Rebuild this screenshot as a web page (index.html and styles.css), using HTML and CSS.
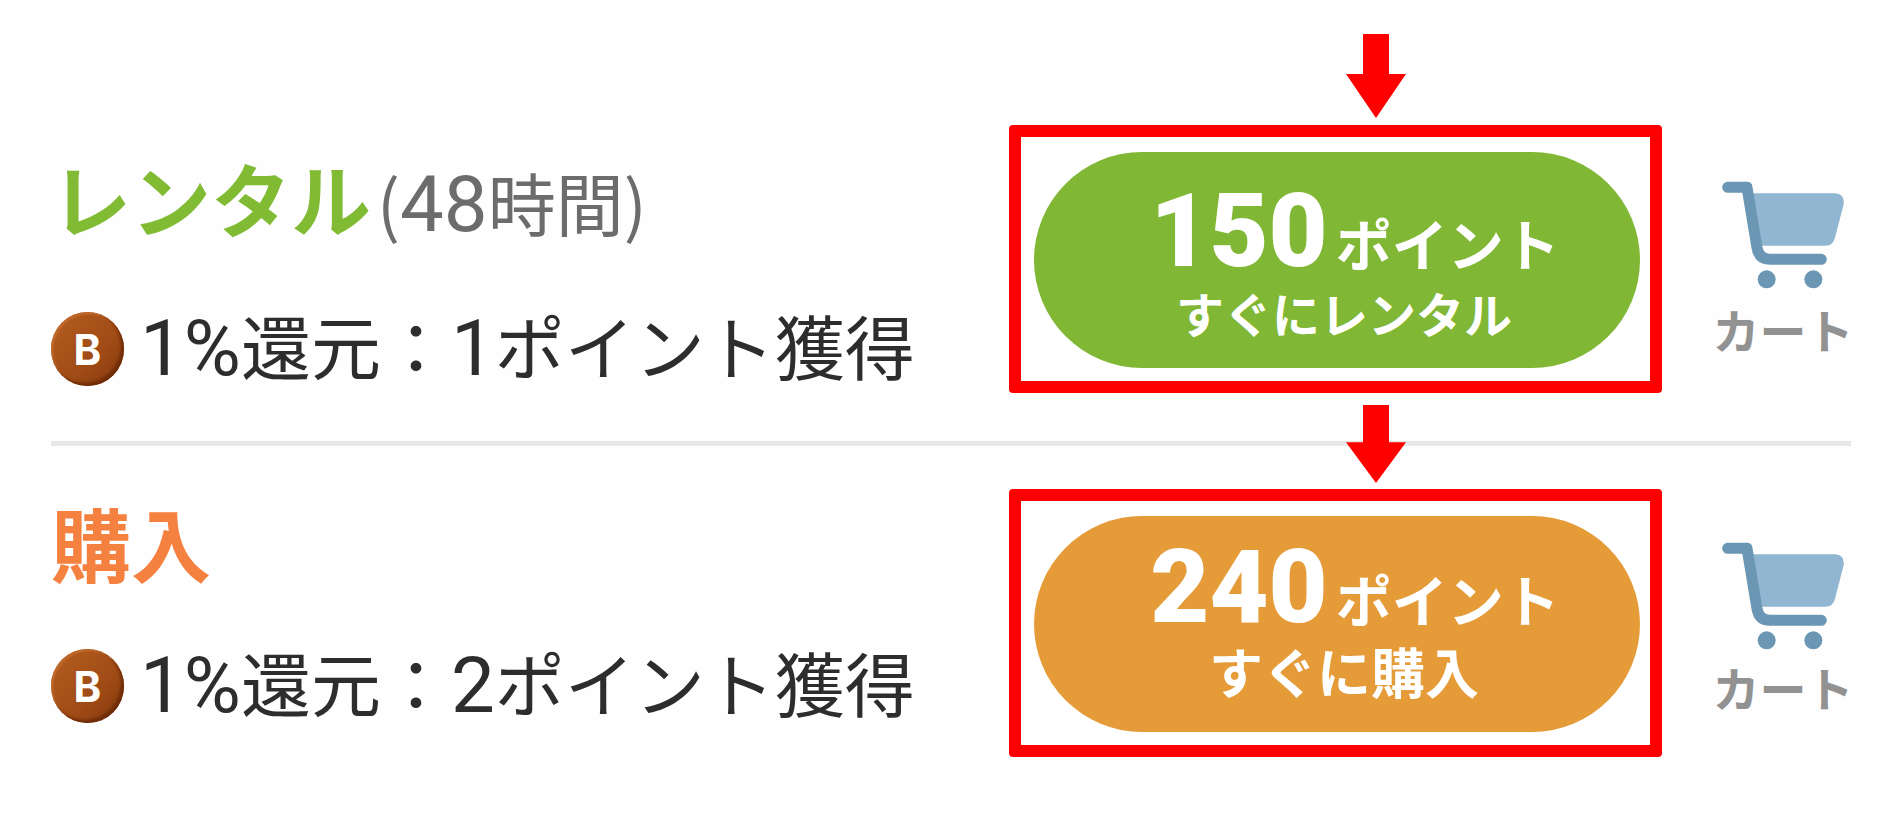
FILE: index.html
```
<!DOCTYPE html>
<html lang="ja">
<head>
    <meta charset="UTF-8">
    <meta name="viewport" content="width=device-width, initial-scale=1.0">
    <title>レンタル・購入</title>
    <link rel="stylesheet" href="styles.css">
</head>
<body>
    <main class="price-list">
        <section class="plan rental">
            <div class="info">
                <h2>レンタル<small>(<span class="num">48</span>時間)</small></h2>
                <p class="reward"><span class="coin">B</span><span class="reward-text"><span class="num">1%</span>還元：<span class="num">1</span>ポイント獲得</span></p>
            </div>
            <div class="frame">
                <svg class="arrow" viewBox="0 0 60 84" preserveAspectRatio="none"><path d="M17 0h26v40h17L30 84 0 40h17z"/></svg>
                <button class="buy-button">
                    <span class="price"><b>150</b>ポイント</span>
                    <span class="action">すぐにレンタル</span>
                </button>
            </div>
            <button class="cart">
                <svg viewBox="60 62 372 324">
                    <path class="basket" d="M150 99H402Q432 101 428 132L402 232Q396 256 374 256H178z"/>
                    <path class="handle" d="M80 81H138L168 262Q174 297 206 297H361"/>
                    <circle cx="197" cy="357" r="27"/>
                    <circle cx="337" cy="357" r="27"/>
                </svg>
                カート
            </button>
        </section>
        <section class="plan purchase">
            <div class="info">
                <h2>購入</h2>
                <p class="reward"><span class="coin">B</span><span class="reward-text"><span class="num">1%</span>還元：<span class="num">2</span>ポイント獲得</span></p>
            </div>
            <div class="frame">
                <svg class="arrow" viewBox="0 0 60 84" preserveAspectRatio="none"><path d="M17 0h26v40h17L30 84 0 40h17z"/></svg>
                <button class="buy-button">
                    <span class="price"><b>240</b>ポイント</span>
                    <span class="action">すぐに購入</span>
                </button>
            </div>
            <button class="cart">
                <svg viewBox="60 62 372 324">
                    <path class="basket" d="M150 99H402Q432 101 428 132L402 232Q396 256 374 256H178z"/>
                    <path class="handle" d="M80 81H138L168 262Q174 297 206 297H361"/>
                    <circle cx="197" cy="357" r="27"/>
                    <circle cx="337" cy="357" r="27"/>
                </svg>
                カート
            </button>
        </section>
    </main>
</body>
</html>
```
FILE: styles.css
```
* {
    box-sizing: border-box;
}
body {
    margin: 0;
    background: #fefefe;
    color: #2d2d2d;
    font-family: "Noto Sans CJK JP", sans-serif;
}
button {
    border: none;
    padding: 0;
    font-family: inherit;
    cursor: pointer;
}
.price-list {
    padding: 0 51px;
}
.plan {
    display: grid;
    grid-template-columns: minmax(0, 905fr) minmax(0, 653fr) 136px;
    column-gap: 53px;
    align-items: start;
}
.rental {
    padding: 125px 0 48px;
}
.purchase {
    border-top: 5px solid #e8e8e8;
    padding: 43px 0 70px;
}

/* Left side: title and points back */
.info {
    display: flex;
    flex-direction: column;
    gap: 76px;
    padding-top: 31px;
    white-space: nowrap;
}
.purchase .info {
    gap: 68px;
    padding-top: 12px;
}
h2 {
    margin: 0;
    font-size: 80px;
    font-weight: 700;
    line-height: 80px;
    color: #80bb33;
}
.purchase h2 {
    color: #f58140;
}
h2 small {
    margin-left: 6px;
    font-size: 68px;
    font-weight: 400;
    line-height: 0;
    color: #6c6c6c;
}
.num {
    font-family: Roboto, sans-serif;
    font-size: 78px;
    line-height: 0;
}
.reward {
    display: flex;
    align-items: center;
    gap: 16px;
    margin: 0;
    font-size: 70px;
}
.reward-text {
    padding-bottom: 8px;
    line-height: 66px;
}
.coin {
    width: 73px;
    height: 74px;
    border-radius: 50%;
    background: linear-gradient(135deg, #b55e20, #a04b16 60%, #83380c);
    box-shadow: inset -3px -3px 3px #6e2c08, inset 2px 2px 2px #c06a2c;
    color: #fff;
    font-family: Inter, sans-serif;
    font-size: 42px;
    font-weight: 700;
    line-height: 76px;
    text-align: center;
}

/* Highlighted button */
.frame {
    position: relative;
    border: 12px solid #f00;
    border-radius: 4px;
    padding: 15px 10px 13px 13px;
    background: #fff;
}
.arrow {
    position: absolute;
    bottom: calc(100% + 19px);
    left: calc(50% + 10px);
    width: 60px;
    height: 84px;
    fill: #f00;
}
.purchase .arrow {
    bottom: calc(100% + 18px);
    height: 78px;
}
.buy-button {
    display: flex;
    flex-direction: column;
    align-items: center;
    width: 100%;
    padding: 42px 0 34px 14px;
    border-radius: 108px;
    background: #80b735;
    color: #fff;
    font-weight: 700;
    white-space: nowrap;
}
.purchase .buy-button {
    padding: 34px 0 36px 14px;
    background: #e59b38;
}
.price {
    padding-left: 22px;
    font-size: 56px;
    line-height: 96px;
}
.price b {
    margin-right: 8px;
    font-family: Roboto, sans-serif;
    font-size: 102px;
    line-height: 0;
}
.action {
    font-size: 48px;
    line-height: 44px;
}
.purchase .action {
    font-size: 54px;
    line-height: 50px;
}

.cart {
    display: flex;
    flex-direction: column;
    align-items: center;
    gap: 14px;
    padding-top: 56px;
    background: none;
    color: #929292;
    font-size: 47px;
    font-weight: 700;
    line-height: 52px;
    white-space: nowrap;
}
.purchase .cart {
    gap: 11px;
    padding-top: 53px;
}
.cart svg {
    width: 124px;
    height: 108px;
    fill: #6c97b4;
}
.cart .basket {
    fill: #91b6d1;
}
.cart .handle {
    fill: none;
    stroke: #6c97b4;
    stroke-width: 33;
    stroke-linecap: round;
    stroke-linejoin: round;
}
```
